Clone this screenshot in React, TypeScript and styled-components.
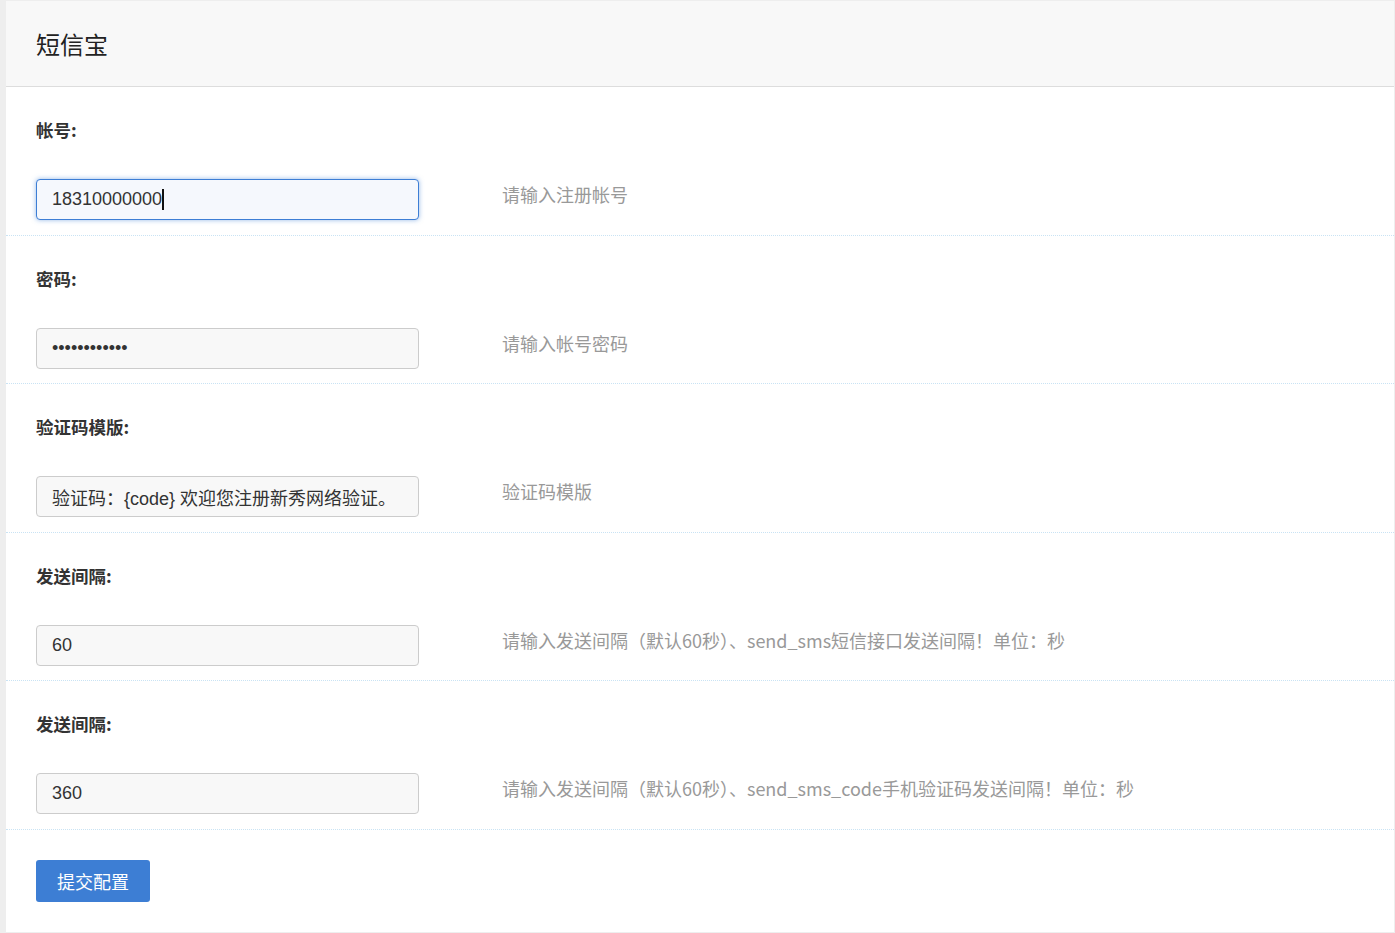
import React from 'react';
import styled, { createGlobalStyle } from 'styled-components';

const GlobalStyle = createGlobalStyle`
  html, body {
    margin: 0;
    padding: 0;
    background: #eeeeee;
  }
  body {
    padding: 1px 1px 1px 6px;
    font-family: "Liberation Sans", "Noto Sans CJK SC", sans-serif;
    color: #333;
  }
  * {
    box-sizing: border-box;
  }
`;

const Panel = styled.div`
  background: #fff;
  min-height: 931px;
`;

const PanelHeader = styled.div`
  height: 86px;
  background: #f8f8f8;
  border-bottom: 1px solid #dddddd;
  display: flex;
  align-items: center;
  padding: 0 30px;
`;

const Title = styled.h1`
  margin: 0;
  font-family: "Noto Sans CJK SC", sans-serif;
  font-size: 24px;
  font-weight: 400;
  color: #222;
  line-height: 1;
`;

const Form = styled.form`
  display: flex;
  flex-direction: column;
`;

const Row = styled.div`
  padding: 30px 30px 14.5px;
  border-bottom: 1px dotted #c9e3f4;
  display: flex;
  flex-direction: column;
  gap: 36px;
`;

const Label = styled.label`
  font-family: "Noto Sans CJK SC", sans-serif;
  font-size: 17.5px;
  font-weight: 700;
  color: #333;
  line-height: 26px;
`;

const Field = styled.div`
  display: grid;
  grid-template-columns: 383px 1fr;
  column-gap: 83px;
  align-items: start;
`;

const InputWrap = styled.div`
  position: relative;
`;

const Input = styled.input<{ $active?: boolean }>`
  display: block;
  height: 41px;
  width: 100%;
  padding: 0 15px;
  font-family: "Liberation Sans", "Noto Sans CJK SC", sans-serif;
  font-size: 18px;
  color: #333;
  border-radius: 4px;
  outline: none;
  caret-color: transparent;
  border: 1px solid ${(p) => (p.$active ? '#3d7ed5' : '#cccccc')};
  background: ${(p) => (p.$active ? '#f5f8fd' : '#f8f8f8')};
  box-shadow: ${(p) => (p.$active ? '0 0 5px rgba(61, 126, 213, 0.55)' : 'none')};
`;

const Caret = styled.span`
  position: absolute;
  left: 126px;
  top: 10px;
  width: 2px;
  height: 21px;
  background: #111;
`;

const Help = styled.span`
  font-family: "Noto Sans CJK SC", sans-serif;
  font-size: 18px;
  line-height: 30px;
  color: #999;
`;

const Actions = styled.div`
  padding: 30px 30px;
`;

const SubmitButton = styled.button`
  height: 42px;
  width: 114px;
  background: #3d7ed4;
  color: #fff;
  border: none;
  border-radius: 3px;
  font-family: "Noto Sans CJK SC", sans-serif;
  font-size: 18px;
  cursor: pointer;
`;

interface SettingField {
  label: string;
  value: string;
  help: string;
  type?: string;
  active?: boolean;
}

const fields: SettingField[] = [
  { label: '帐号:', value: '18310000000', help: '请输入注册帐号', active: true },
  { label: '密码:', value: '123456789012', help: '请输入帐号密码', type: 'password' },
  { label: '验证码模版:', value: '验证码：{code} 欢迎您注册新秀网络验证。', help: '验证码模版' },
  { label: '发送间隔:', value: '60', help: '请输入发送间隔（默认60秒）、send_sms短信接口发送间隔！单位：秒' },
  { label: '发送间隔:', value: '360', help: '请输入发送间隔（默认60秒）、send_sms_code手机验证码发送间隔！单位：秒' },
];

const App: React.FC = () => {
  return (
    <>
      <GlobalStyle />
      <Panel>
        <PanelHeader>
          <Title>短信宝</Title>
        </PanelHeader>
        <Form onSubmit={(e) => e.preventDefault()}>
          {fields.map((field, i) => (
            <Row key={i}>
              <Label>{field.label}</Label>
              <Field>
                <InputWrap>
                  <Input
                    type={field.type || 'text'}
                    defaultValue={field.value}
                    $active={field.active}
                  />
                  {field.active && <Caret />}
                </InputWrap>
                <Help>{field.help}</Help>
              </Field>
            </Row>
          ))}
          <Actions>
            <SubmitButton type="submit">提交配置</SubmitButton>
          </Actions>
        </Form>
      </Panel>
    </>
  );
};

export default App;
